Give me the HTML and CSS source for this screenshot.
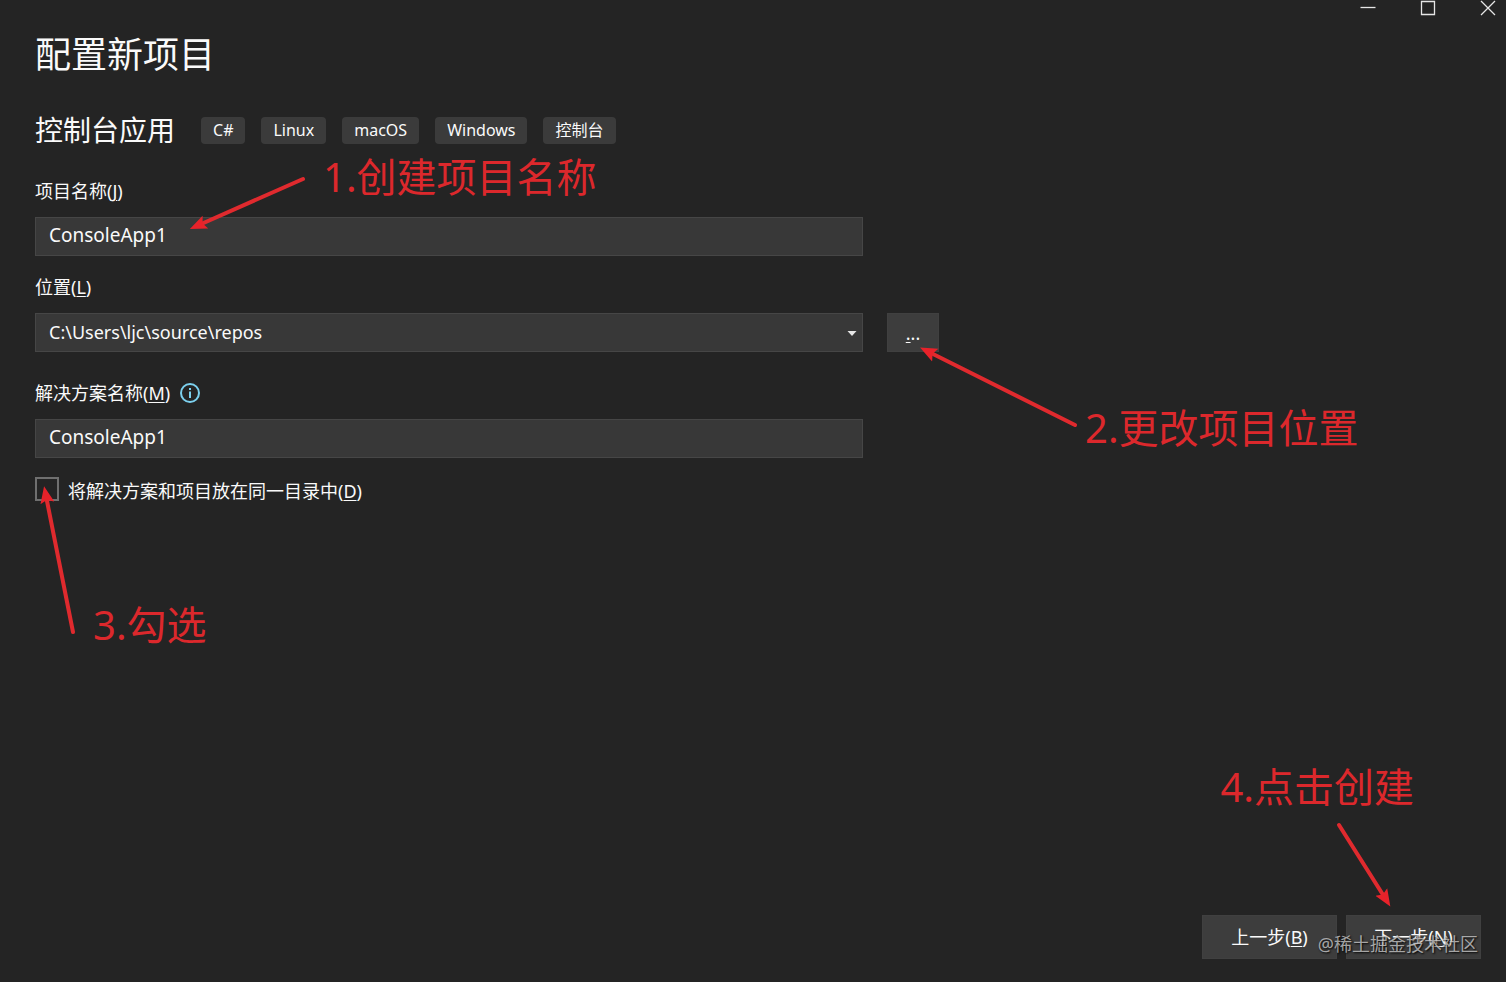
FILE: index.html
```
<!DOCTYPE html>
<html lang="zh-CN">

<head>
    <meta charset="UTF-8">
    <meta name="viewport" content="width=device-width, initial-scale=1.0">
    <title>配置新项目</title>
    <link rel="stylesheet" href="styles.css">
</head>

<body>
    <header class="titlebar">
        <button type="button" class="window-btn" aria-label="最小化">
            <svg width="16" height="16" viewBox="0 0 16 16"><path d="M0.5 7.5H15.5" /></svg>
        </button>
        <button type="button" class="window-btn" aria-label="最大化">
            <svg width="16" height="16" viewBox="0 0 16 16"><path d="M1.5 1.5H14.5V14.5H1.5Z" /></svg>
        </button>
        <button type="button" class="window-btn" aria-label="关闭">
            <svg width="16" height="16" viewBox="0 0 16 16"><path d="M1 1L15 15M15 1L1 15" /></svg>
        </button>
    </header>

    <main class="content">
        <h1 class="title">配置新项目</h1>
        <div class="template">
            <h2 class="template-name">控制台应用</h2>
            <ul class="tags">
                <li class="tag">C#</li>
                <li class="tag">Linux</li>
                <li class="tag">macOS</li>
                <li class="tag">Windows</li>
                <li class="tag">控制台</li>
            </ul>
        </div>

        <form id="project-form" class="form">
            <div class="field">
                <label for="project-name">项目名称(<u>J</u>)</label>
                <input type="text" id="project-name" class="control" value="ConsoleApp1">
            </div>
            <div class="field field-location">
                <label for="location">位置(<u>L</u>)</label>
                <div class="select-wrap">
                    <select id="location" class="control">
                        <option>C:\Users\ljc\source\repos</option>
                    </select>
                    <svg class="caret" width="10" height="5" viewBox="0 0 10 5"><path d="M0.5 0H9.5L5 5Z" /></svg>
                </div>
                <button type="button" class="browse-btn" aria-label="浏览"><u>.</u>..</button>
            </div>
            <div class="field">
                <label for="solution-name" class="label-info">解决方案名称(<u>M</u>)
                    <svg class="info" width="20" height="20" viewBox="0 0 20 20">
                        <circle cx="10" cy="10" r="9" />
                        <path d="M10 8.5V15M10 5V7" />
                    </svg>
                </label>
                <input type="text" id="solution-name" class="control" value="ConsoleApp1">
            </div>
            <div class="check">
                <input type="checkbox" id="same-dir">
                <label for="same-dir">将解决方案和项目放在同一目录中(<u>D</u>)</label>
            </div>
        </form>
    </main>

    <footer class="footer">
        <button type="button" class="nav-btn">上一步(<u>B</u>)</button>
        <button type="submit" form="project-form" class="nav-btn">下一步(<u>N</u>)</button>
    </footer>

    <!-- Tutorial notes and arrows over the dialog -->
    <p class="note note-name">1.创建项目名称</p>
    <p class="note note-location">2.更改项目位置</p>
    <p class="note note-check">3.勾选</p>
    <p class="note note-create">4.点击创建</p>

    <svg class="arrow arrow-name" width="130" height="70" viewBox="0 0 130 70">
        <defs>
            <marker id="head" markerUnits="userSpaceOnUse" markerWidth="20" markerHeight="16" refX="7" refY="8" orient="auto">
                <path d="M0 1L17 8L0 15L3 8Z" fill="#e8222a" />
            </marker>
        </defs>
        <path d="M123 9L19 55" marker-end="url(#head)" />
    </svg>
    <svg class="arrow arrow-location" width="170" height="100" viewBox="0 0 170 100">
        <path d="M165 85L19 12" marker-end="url(#head)" />
    </svg>
    <svg class="arrow arrow-check" width="50" height="160" viewBox="0 0 50 160">
        <path d="M43 152L16 16" marker-end="url(#head)" />
    </svg>
    <svg class="arrow arrow-create" width="70" height="100" viewBox="0 0 70 100">
        <path d="M9 5L55 78" marker-end="url(#head)" />
    </svg>

    <span class="watermark">@稀土掘金技术社区</span>
</body>

</html>
```
FILE: styles.css
```
* {
    box-sizing: border-box;
}

body {
    position: relative;
    display: flex;
    flex-direction: column;
    min-height: 100vh;
    margin: 0;
    background-color: #242424;
    color: #fafafa;
    font-family: "Noto Sans", "Noto Sans CJK SC", sans-serif;
    font-size: 18px;
    line-height: 24px;
}

button,
input,
select {
    margin: 0;
    color: inherit;
    font: inherit;
}

u {
    text-decoration-thickness: 1px;
    text-underline-offset: 2px;
}

.titlebar {
    display: flex;
    justify-content: flex-end;
    gap: 24px;
}

.window-btn {
    display: flex;
    justify-content: center;
    width: 36px;
    padding: 0;
    border: none;
    background: none;
}

.window-btn path {
    fill: none;
    stroke: #e6e6e6;
    stroke-width: 1.3;
}

.content {
    flex: 1;
    padding: 15px 35px 0;
}

.title {
    margin: 0 0 31px;
    font-size: 36px;
    font-weight: 400;
    line-height: 48px;
}

.template {
    display: flex;
    align-items: center;
    gap: 26px;
    margin-bottom: 29px;
}

.template-name {
    margin: 0;
    font-size: 28px;
    font-weight: 400;
    line-height: 40px;
}

.tags {
    display: flex;
    gap: 16px;
    margin: 0;
    padding: 0;
    list-style: none;
}

.tag {
    height: 27px;
    padding: 0 12px;
    border-radius: 4px;
    background-color: #3b3b3b;
    font-size: 16px;
    line-height: 27px;
}

.form {
    max-width: 904px;
}

.field {
    display: grid;
    grid-template-columns: 1fr 52px;
    gap: 14px 24px;
    margin-bottom: 19px;
}

.field label {
    grid-column: 1 / -1;
}

.field-location {
    margin-bottom: 29px;
}

.label-info {
    display: flex;
    align-items: center;
}

.control {
    width: 100%;
    height: 39px;
    padding: 0 13px 3px;
    border: 1px solid #464646;
    border-radius: 0;
    background-color: #383838;
    font-size: 19px;
    appearance: none;
    outline: none;
}

.select-wrap {
    position: relative;
}

.select-wrap .control {
    padding-bottom: 1px;
    font-size: 18px;
}

.caret {
    position: absolute;
    top: 18px;
    right: 6px;
    fill: #e6e6e6;
    pointer-events: none;
}

.browse-btn {
    padding: 0;
    border: 1px solid #404040;
    background-color: #3d3d3d;
}

.info {
    margin-left: 10px;
    fill: none;
    stroke: #7cd0ee;
    stroke-width: 2;
}

.check {
    display: flex;
    align-items: center;
    gap: 9px;
}

.check input {
    width: 24px;
    height: 24px;
    border: 2px solid #6f6f6f;
    appearance: none;
}

.check label {
    padding-top: 4px;
    line-height: 20px;
}

.footer {
    display: flex;
    justify-content: flex-end;
    gap: 9px;
    padding: 0 25px 23px;
}

.nav-btn {
    width: 135px;
    height: 44px;
    border: 1px solid #404040;
    background-color: #3d3d3d;
}

.note {
    position: absolute;
    margin: 0;
    color: #dc282c;
    font-size: 40px;
    line-height: 56px;
    white-space: nowrap;
}

.note-name {
    top: 149px;
    left: 323px;
}

.note-location {
    top: 400px;
    left: 1085px;
}

.note-check {
    top: 597px;
    left: 93px;
}

.note-create {
    right: 92px;
    bottom: 167px;
}

.arrow {
    position: absolute;
    fill: none;
    stroke: #e02a2e;
    stroke-width: 4;
    stroke-linecap: round;
    pointer-events: none;
}

.arrow marker path {
    stroke: none;
}

.arrow-name {
    top: 170px;
    left: 180px;
}

.arrow-location {
    top: 340px;
    left: 910px;
}

.arrow-check {
    top: 480px;
    left: 30px;
}

.arrow-create {
    right: 106px;
    bottom: 62px;
}

.watermark {
    position: absolute;
    right: 28px;
    bottom: 26px;
    color: rgba(210, 210, 210, 0.75);
    text-shadow: 1px 1px 2px #000;
    pointer-events: none;
}
```
